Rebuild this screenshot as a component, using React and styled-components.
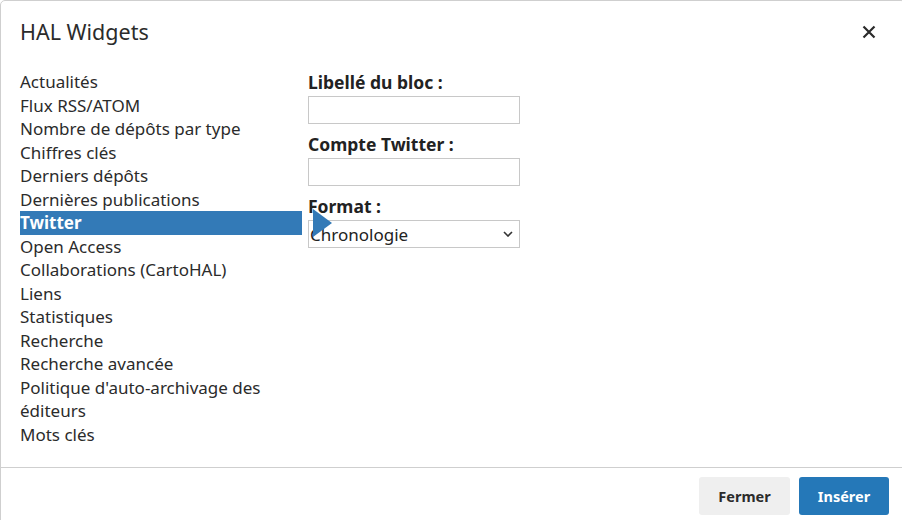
import React from "react";
import styled, { createGlobalStyle } from "styled-components";

const Global = createGlobalStyle`
  html, body { margin: 0; padding: 0; background: #fff; overflow: hidden; }
  body { font-family: "Noto Sans", "Open Sans", sans-serif; color: #333; }
  * { box-sizing: border-box; }
`;

const Dialog = styled.div`
  width: 906px;
  height: 540px;
  border: 1px solid #cfcfcf;
  border-radius: 5px;
  background: #fff;
  display: flex;
  flex-direction: column;
`;

const Header = styled.div`
  display: flex;
  align-items: center;
  justify-content: space-between;
  padding: 17px 29px 0 19px;
  height: 44px;
`;

const Title = styled.h4`
  margin: 0;
  font-size: 21.5px;
  font-weight: 400;
  line-height: 26px;
  color: #2b2b2b;
`;

const Close = styled.button`
  border: 0;
  background: none;
  padding: 0;
  width: 14px;
  height: 14px;
  display: flex;
  cursor: pointer;
  margin-top: 1px;
`;

const Body = styled.div`
  display: grid;
  grid-template-columns: 282px 212px;
  column-gap: 6px;
  padding: 25px 19px 21px;
`;

const List = styled.ul`
  list-style: none;
  margin: 0;
  padding: 0;
`;

const Item = styled.li`
  position: relative;
  font-size: 17px;
  line-height: 23.5px;
  color: ${(p) => (p.$active ? "#fff" : "#2b2b2b")};
  background: ${(p) => (p.$active ? "#337ab7" : "transparent")};
  font-weight: ${(p) => (p.$active ? 700 : 400)};
  cursor: pointer;
`;

const Pointer = styled.span`
  position: absolute;
  left: calc(100% + 11px);
  top: -2px;
  width: 0;
  height: 0;
  border-left: 19px solid #337ab7;
  border-top: 14px solid transparent;
  border-bottom: 14px solid transparent;
  z-index: 2;
`;

const Form = styled.div`
  display: flex;
  flex-direction: column;
`;

const Label = styled.label`
  font-size: 17.5px;
  font-weight: 700;
  line-height: 24px;
  color: #222;
  margin-bottom: 2px;
`;

const Input = styled.input`
  width: 212px;
  height: 28px;
  border: 1px solid #c8c8c8;
  border-radius: 0;
  margin: 0 0 8px;
  padding: 2px 4px;
  font: inherit;
  font-size: 16px;
  outline: none;
`;

const SelectWrap = styled.div`
  position: relative;
  width: 212px;
  height: 28px;
`;

const Select = styled.select`
  appearance: none;
  width: 100%;
  height: 100%;
  border: 1px solid #c8c8c8;
  border-radius: 0;
  background: #fff;
  padding: 0 0 0 1px;
  font-family: "Noto Sans", "Open Sans", sans-serif;
  font-size: 17px;
  color: #222;
  outline: none;
`;

const Chevron = styled.svg`
  position: absolute;
  right: 7px;
  top: 11px;
  pointer-events: none;
`;

const Footer = styled.div`
  border-top: 1px solid #cfcfcf;
  display: flex;
  justify-content: flex-end;
  gap: 9px;
  padding: 9px 16px 0 0;
`;

const Button = styled.button`
  height: 38px;
  width: ${(p) => (p.$primary ? "90px" : "91px")};
  border: 0;
  border-radius: 3px;
  font-family: "Noto Sans", "Open Sans", sans-serif;
  font-size: 14.5px;
  font-weight: 700;
  cursor: pointer;
  background: ${(p) => (p.$primary ? "#2578b8" : "#efefef")};
  color: ${(p) => (p.$primary ? "#fff" : "#2b2b2b")};
`;

const items = [
  "Actualités",
  "Flux RSS/ATOM",
  "Nombre de dépôts par type",
  "Chiffres clés",
  "Derniers dépôts",
  "Dernières publications",
  "Twitter",
  "Open Access",
  "Collaborations (CartoHAL)",
  "Liens",
  "Statistiques",
  "Recherche",
  "Recherche avancée",
  "Politique d'auto-archivage des éditeurs",
  "Mots clés",
];

export default function App() {
  return (
    <>
      <Global />
      <Dialog>
        <Header>
          <Title>HAL Widgets</Title>
          <Close aria-label="Fermer">
            <svg width="14" height="14" viewBox="0 0 14 14">
              <path d="M1.5 1.5 L12.5 12.5 M12.5 1.5 L1.5 12.5" stroke="#2b2b2b" strokeWidth="2.2" />
            </svg>
          </Close>
        </Header>
        <Body>
          <List>
            {items.map((t) => (
              <Item key={t} $active={t === "Twitter"}>
                {t}
                {t === "Twitter" && <Pointer />}
              </Item>
            ))}
          </List>
          <Form>
            <Label>Libellé du bloc :</Label>
            <Input type="text" />
            <Label>Compte Twitter :</Label>
            <Input type="text" />
            <Label>Format :</Label>
            <SelectWrap>
              <Select defaultValue="chrono">
                <option value="chrono">Chronologie</option>
                <option value="grid">Grille</option>
              </Select>
              <Chevron width="10" height="6" viewBox="0 0 10 6">
                <path d="M1 1 L5 5 L9 1" fill="none" stroke="#333" strokeWidth="1.6" />
              </Chevron>
            </SelectWrap>
          </Form>
        </Body>
        <Footer>
          <Button>Fermer</Button>
          <Button $primary>Insérer</Button>
        </Footer>
      </Dialog>
    </>
  );
}
